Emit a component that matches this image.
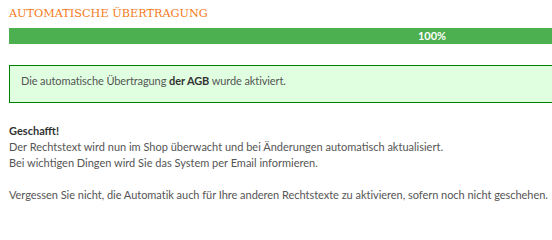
export default function App() {
  return (
    <div className="w-[846px] ml-[9px] pt-[6px] font-['Lato',sans-serif] text-[11px] leading-[16px] text-[#555]">
      <h2 className="font-['DejaVu_Serif',serif] text-[11.25px] leading-[16px] text-[#f47a20]">
        AUTOMATISCHE ÜBERTRAGUNG
      </h2>

      <div className="mt-[6px] h-[16px] bg-[#4caf50] text-center text-white font-bold leading-[16px]">
        100%
      </div>

      <div className="mt-[21px] border border-[#008000] bg-[#e0ffe0] pl-[11px] pt-[7px] pb-[13px] tracking-[-0.1px]">
        Die automatische Übertragung <span className="font-bold text-[#333]">der AGB</span> wurde aktiviert.
      </div>

      <div className="mt-[20px]">
        <p className="font-bold text-[#333]">Geschafft!</p>
        <p>Der Rechtstext wird nun im Shop überwacht und bei Änderungen automatisch aktualisiert.</p>
        <p>Bei wichtigen Dingen wird Sie das System per Email informieren.</p>
        <p className="mt-[16px] tracking-[-0.03px]">
          Vergessen Sie nicht, die Automatik auch für Ihre anderen Rechtstexte zu aktivieren, sofern noch nicht geschehen.
        </p>
      </div>
    </div>
  );
}
